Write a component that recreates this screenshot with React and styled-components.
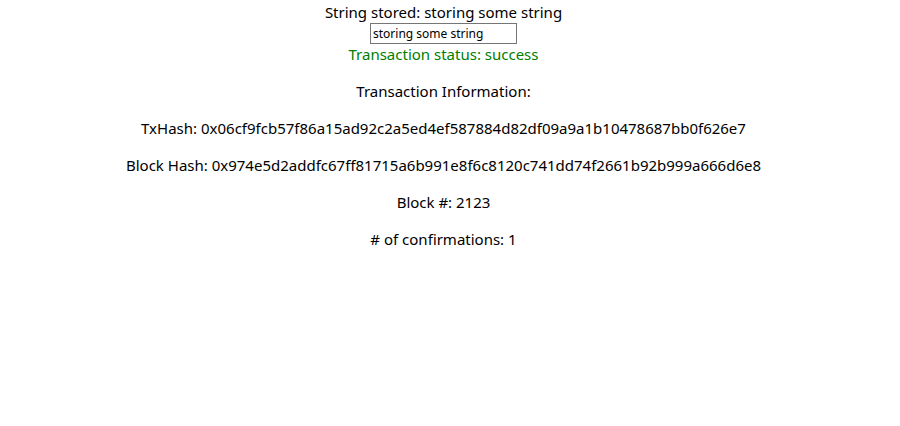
import { Fragment } from "react";
import styled, { createGlobalStyle } from "styled-components";

const GlobalStyle = createGlobalStyle`
  body {
    margin: 0;
    background: #ffffff;
    color: #000000;
    font-family: "Noto Sans", "Open Sans", sans-serif;
    font-size: 15px;
    line-height: 21px;
  }
`;

const Page = styled.div`
  padding: 2px 13px 0 0;
  text-align: center;
`;

const Line = styled.div`
  color: ${props => (props.status ? "#008000" : "#000000")};
`;

const StoreInput = styled.input`
  box-sizing: border-box;
  width: 147px;
  height: 21px;
  margin: 0;
  padding: 1px 2px;
  border: 1px solid #767676;
  font-family: "Noto Sans", sans-serif;
  font-size: 12px;
  color: #000000;
  vertical-align: top;
`;

const Info = styled.p`
  margin: 16px 0;
`;

const info = [
  "Transaction Information:",
  "TxHash: 0x06cf9fcb57f86a15ad92c2a5ed4ef587884d82df09a9a1b10478687bb0f626e7",
  "Block Hash: 0x974e5d2addfc67ff81715a6b991e8f6c8120c741dd74f2661b92b999a666d6e8",
  "Block #: 2123",
  "# of confirmations: 1"
];

const App = () => (
  <Fragment>
    <GlobalStyle />
    <Page>
      <Line>String stored: storing some string</Line>
      <StoreInput type="text" defaultValue="storing some string" />
      <Line status>Transaction status: success</Line>
      {info.map((text, index) => (
        <Info key={index}>{text}</Info>
      ))}
    </Page>
  </Fragment>
);

export default App;
